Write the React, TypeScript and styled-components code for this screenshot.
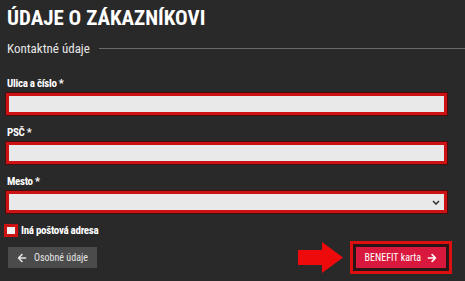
import React from "react";
import styled, { createGlobalStyle } from "styled-components";
import { FaArrowLeft, FaArrowRight } from "react-icons/fa";

const Global = createGlobalStyle`
  html, body { margin: 0; padding: 0; background: #292929; }
  body { font-family: "Roboto Condensed", "Liberation Sans Narrow", Roboto, "Liberation Sans", sans-serif; }
`;

const Page = styled.div`
  width: 465px;
  height: 281px;
  box-sizing: border-box;
  padding: 5px 18px 0 7px;
  background: #292929;
  overflow: hidden;
`;

const Title = styled.h1`
  margin: 0;
  font-size: 21px;
  line-height: 26px;
  font-weight: 700;
  color: #ffffff;
  letter-spacing: 0;
`;

const SectionHead = styled.div`
  display: flex;
  align-items: center;
  gap: 9px;
  margin: 9px -18px 20px 0;
`;

const SectionText = styled.span`
  font-size: 13px;
  line-height: 17px;
  font-weight: 400;
  color: #e6e6e6;
  white-space: nowrap;
`;

const Rule = styled.div`
  flex: 1;
  height: 1px;
  background: #6a6a6a;
`;

const Field = styled.div`
  display: flex;
  flex-direction: column;
  gap: 3px;
  margin-bottom: 11px;
`;

const Label = styled.label`
  font-size: 11px;
  line-height: 13px;
  font-weight: 700;
  letter-spacing: -0.3px;
  color: #ffffff;
`;

const InputBox = styled.div`
  position: relative;
  height: 22px;
  box-sizing: border-box;
  margin-left: -1px;
  border: 3px solid #cc1212;
  background: #e9e9e9;
  box-shadow: 0 0 0 1px #4a0d0d;
`;

const Chevron = styled.svg`
  position: absolute;
  right: 4px;
  top: 6px;
`;

const CheckRow = styled.div`
  display: flex;
  align-items: center;
  gap: 3px;
  margin: 3px 0 0 -3px;
`;

const CheckBox = styled.span`
  width: 14px;
  height: 13px;
  box-sizing: border-box;
  border: 3px solid #cc1212;
  background: #f2f2f2;
`;

const CheckLabel = styled.span`
  font-size: 11px;
  line-height: 13px;
  font-weight: 700;
  letter-spacing: -0.3px;
  color: #ffffff;
`;

const ButtonRow = styled.div`
  display: flex;
  align-items: center;
  justify-content: space-between;
  margin: 4px -5px 0 1px;
`;

const Button = styled.button<{ $primary?: boolean }>`
  display: flex;
  align-items: center;
  gap: ${(p) => (p.$primary ? "6px" : "7px")};
  height: 21px;
  box-sizing: border-box;
  padding: 0 9px;
  border: none;
  background: ${(p) => (p.$primary ? "#d8183d" : "#4b4b4b")};
  color: ${(p) => (p.$primary ? "#ffffff" : "#e4e4e4")};
  font-family: inherit;
  font-size: 10px;
  font-weight: 400;
  cursor: pointer;
`;

const RightGroup = styled.div`
  display: flex;
  align-items: center;
  gap: 7px;
`;

const Highlight = styled.div`
  padding: 3px;
  border: 3px solid #dd0f0f;
  background: #2a1416;
`;

const Arrow = () => (
  <svg width="45" height="31" viewBox="0 0 45 31">
    <polygon points="0,8 24,8 24,0 45,15.5 24,31 24,23 0,23" fill="#ee0a0a" />
  </svg>
);

export default function App() {
  return (
    <Page>
      <Global />
      <Title>ÚDAJE O ZÁKAZNÍKOVI</Title>
      <SectionHead>
        <SectionText>Kontaktné údaje</SectionText>
        <Rule />
      </SectionHead>
      <Field>
        <Label>Ulica a číslo *</Label>
        <InputBox />
      </Field>
      <Field>
        <Label>PSČ *</Label>
        <InputBox />
      </Field>
      <Field>
        <Label>Mesto *</Label>
        <InputBox>
          <Chevron width="8" height="5" viewBox="0 0 8 5">
            <path d="M1 1l3 3 3-3" stroke="#333" strokeWidth="1.6" fill="none" />
          </Chevron>
        </InputBox>
      </Field>
      <CheckRow>
        <CheckBox />
        <CheckLabel>Iná poštová adresa</CheckLabel>
      </CheckRow>
      <ButtonRow>
        <Button>
          <FaArrowLeft size={10} />
          Osobné údaje
        </Button>
        <RightGroup>
          <Arrow />
          <Highlight>
            <Button $primary>
              BENEFIT karta
              <FaArrowRight size={10} />
            </Button>
          </Highlight>
        </RightGroup>
      </ButtonRow>
    </Page>
  );
}
